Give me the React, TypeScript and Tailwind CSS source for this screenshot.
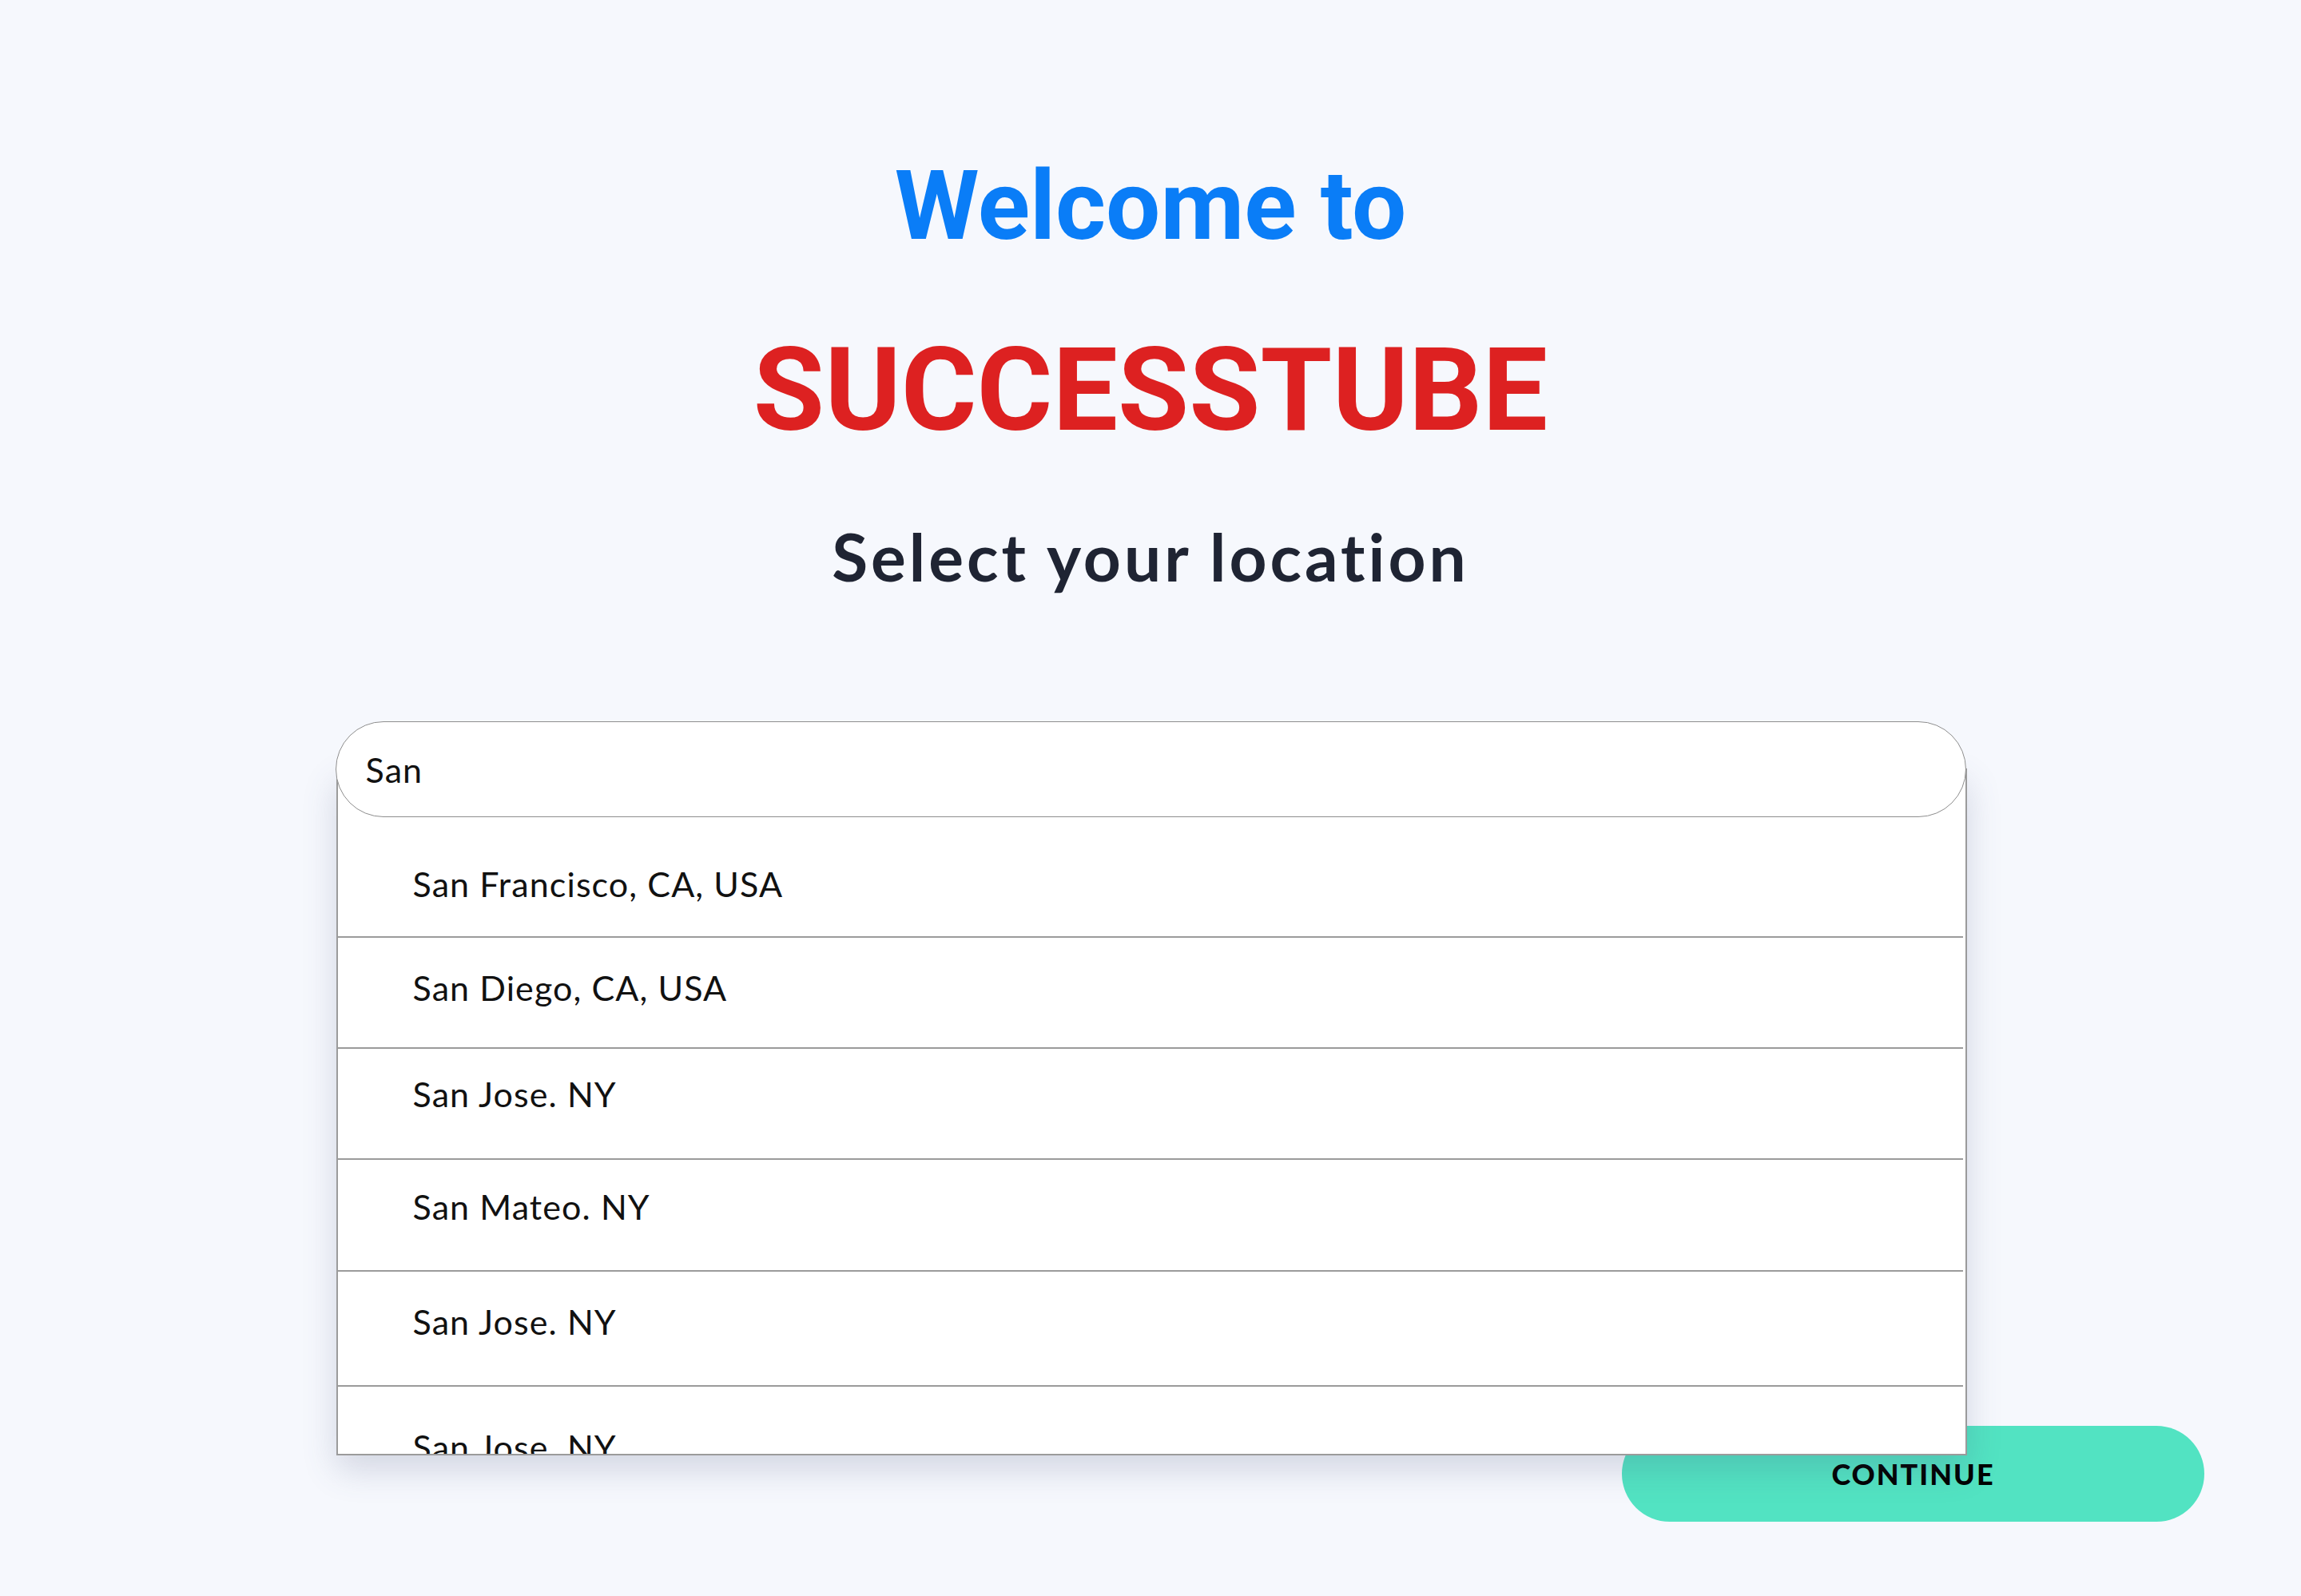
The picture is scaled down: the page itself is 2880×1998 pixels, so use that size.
const rows = [
  { label: 'San Francisco, CA, USA', cls: 'h-[149px] pt-[62px]' },
  { label: 'San Diego, CA, USA', cls: 'h-[137px] pt-[41px]' },
  { label: 'San Jose. NY', cls: 'h-[137px] pt-[35px]' },
  { label: 'San Mateo. NY', cls: 'h-[138px] pt-[37px]' },
  { label: 'San Jose. NY', cls: 'h-[142px] pt-[41px]' },
  { label: 'San Jose. NY', cls: 'h-[140px] pt-[54px]' },
]

function LocationDropdown() {
  return (
    <div className="absolute left-[1px] right-[-1px] top-[59px] h-[860px] overflow-hidden border-2 border-[#9b9b9b] bg-white shadow-[0_18px_40px_rgba(70,80,120,0.2)]">
      <div className="h-[59px]" />
      {rows.map((row, i) => (
        <div key={i}>
          <div className={`${row.cls} pl-[94px] font-['Lato',sans-serif] text-[43px] leading-none tracking-[1.1px] text-[#111]`}>
            {row.label}
          </div>
          {i < rows.length - 1 && <div className="h-[2px] mr-[3px] bg-[#9b9b9b]" />}
        </div>
      ))}
    </div>
  )
}

export default function App() {
  return (
    <div className="min-h-screen bg-[#f6f8fd] flex flex-col items-center pt-[198px]">
      <h1 className="font-['Roboto',sans-serif] font-bold text-[121px] leading-none text-[#0a7df7]">
        Welcome to
      </h1>
      <h1 className="mt-[97px] font-['Roboto',sans-serif] font-bold text-[145px] leading-none text-[#dd2121]">
        SUCCESSTUBE
      </h1>
      <h2 className="mt-[94px] font-['Lato',sans-serif] font-bold text-[82px] leading-none tracking-[4px] text-[#1f2433]">
        Select your location
      </h2>

      <div className="relative z-10 mt-[166px] w-[2041px]">
        <LocationDropdown />
        <div className="relative z-10 h-[120px] rounded-full border-[1.5px] border-[#8e8e8e] bg-white flex items-center pl-[37px]">
          <span className="font-['Lato',sans-serif] text-[43px] leading-none tracking-[1.1px] text-[#111]">San</span>
        </div>
      </div>

      <div className="w-full flex justify-end pr-[121px] mt-[762px]">
        <button className="w-[729px] h-[120px] rounded-full bg-[#52e3c2] font-['Lato',sans-serif] font-black text-[36px] tracking-[2px] text-black">
          CONTINUE
        </button>
      </div>
    </div>
  )
}
